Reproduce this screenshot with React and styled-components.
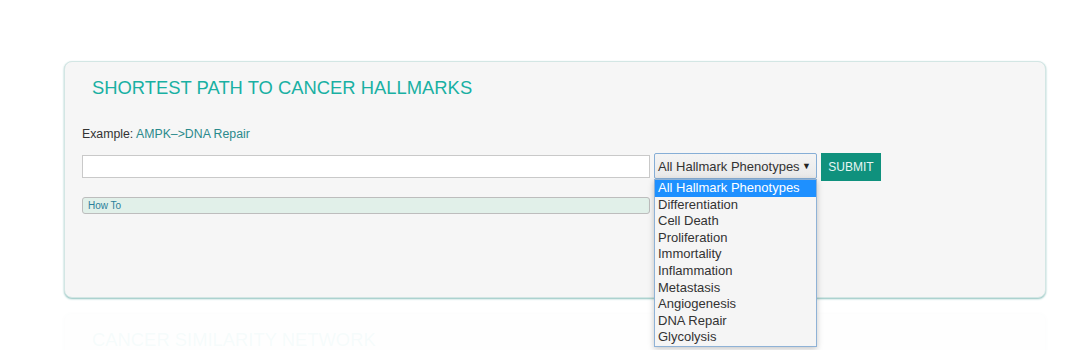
import React from "react";
import styled, { createGlobalStyle } from "styled-components";

const GlobalStyle = createGlobalStyle`
  body {
    margin: 0;
    background: #ffffff;
    font-family: "Liberation Sans", Arial, sans-serif;
  }
`;

const Page = styled.div`
  padding: 61px 0 0 64px;
  height: 350px;
  box-sizing: border-box;
  overflow: hidden;
`;

const Card = styled.section`
  position: relative;
  width: 982px;
  height: 237px;
  box-sizing: border-box;
  padding: 16px 17px;
  background: #f6f6f6;
  border: 1px solid #d3e6e4;
  border-radius: 8px;
  box-shadow: 0 1px 2px #8fc2be;
  opacity: ${(p) => (p.$faded ? 0.04 : 1)};
  margin-top: ${(p) => (p.$faded ? "15px" : "0")};
`;

const Title = styled.h3`
  margin: 0 0 0 10px;
  font-size: 18.4px;
  line-height: 20px;
  font-weight: normal;
  color: #19b0a3;
`;

const Example = styled.div`
  margin-top: 28px;
  font-size: 12.3px;
  line-height: 16px;
  color: #333;
`;

const ExampleLink = styled.span`
  color: #2b8a8c;
`;

const FormRow = styled.div`
  display: flex;
  align-items: flex-start;
  margin-top: 11px;
`;

const TextInput = styled.div`
  width: 568px;
  height: 23px;
  margin-top: 2px;
  box-sizing: border-box;
  background: #fff;
  border: 1px solid #c9c9c9;
`;

const SelectWrap = styled.div`
  position: relative;
  margin-left: 4px;
`;

const SelectBox = styled.div`
  width: 163px;
  height: 26px;
  box-sizing: border-box;
  display: flex;
  align-items: center;
  justify-content: space-between;
  padding: 0 5px 0 3px;
  background: linear-gradient(#f4f4f4, #e9e9e9);
  border: 1px solid #86aed6;
  border-radius: 2px;
  font-size: 13px;
  color: #333;
`;

const Arrow = styled.span`
  font-size: 9px;
  color: #222;
`;

const Submit = styled.div`
  margin-left: 4px;
  width: 60px;
  height: 28px;
  display: flex;
  align-items: center;
  justify-content: center;
  background: #0f917d;
  color: #e8f6f3;
  font-size: 12px;
`;

const HowTo = styled.div`
  margin-top: 16px;
  width: 568px;
  height: 17px;
  box-sizing: border-box;
  padding-left: 5px;
  display: flex;
  align-items: center;
  background: #e1f0e9;
  border: 1px solid #bdbdbd;
  border-radius: 3px;
  font-size: 10px;
  color: #2c7f9a;
`;

const List = styled.ul`
  position: absolute;
  top: 100%;
  left: 0;
  width: 163px;
  margin: 0;
  padding: 0;
  list-style: none;
  box-sizing: border-box;
  background: #f5f5f5;
  border: 1px solid #8fb2d6;
  box-shadow: 0 2px 6px rgba(0, 0, 0, 0.22);
  z-index: 5;
`;

const Option = styled.li`
  height: 16.6px;
  line-height: 16.6px;
  padding: 0 3px;
  font-size: 13px;
  color: ${(p) => (p.$active ? "#fff" : "#333")};
  background: ${(p) => (p.$active ? "#1e90ff" : "transparent")};
  white-space: nowrap;
`;

const options = [
  "All Hallmark Phenotypes",
  "Differentiation",
  "Cell Death",
  "Proliferation",
  "Immortality",
  "Inflammation",
  "Metastasis",
  "Angiogenesis",
  "DNA Repair",
  "Glycolysis",
];

export default function App() {
  return (
    <Page>
      <GlobalStyle />
      <Card>
        <Title>SHORTEST PATH TO CANCER HALLMARKS</Title>
        <Example>
          Example: <ExampleLink>AMPK–&gt;DNA Repair</ExampleLink>
        </Example>
        <FormRow>
          <TextInput />
          <SelectWrap>
            <SelectBox>
              All Hallmark Phenotypes <Arrow>▼</Arrow>
            </SelectBox>
            <List>
              {options.map((o, i) => (
                <Option key={o} $active={i === 0}>
                  {o}
                </Option>
              ))}
            </List>
          </SelectWrap>
          <Submit>SUBMIT</Submit>
        </FormRow>
        <HowTo>How To</HowTo>
      </Card>
      <Card $faded>
        <Title>CANCER SIMILARITY NETWORK</Title>
      </Card>
    </Page>
  );
}
